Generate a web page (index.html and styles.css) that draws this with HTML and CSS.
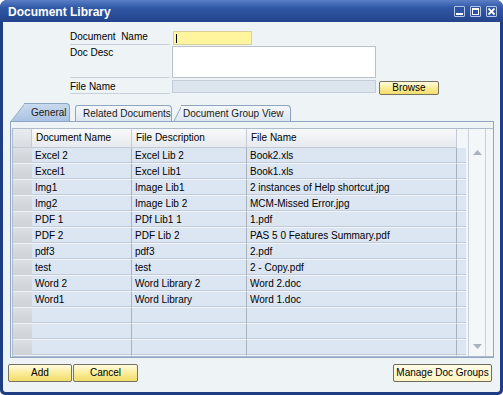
FILE: index.html
```html
<!DOCTYPE html>
<html lang="en">

<head>
    <meta charset="UTF-8">
    <title>Document Library</title>
    <link rel="stylesheet" href="styles.css">
</head>

<body>
    <div class="window">

        <!-- Title bar -->
        <div class="titlebar">
            <span class="title">Document Library</span>
            <div class="win-btns">
                <span class="win-btn">
                    <svg width="9" height="9" viewBox="0 0 9 9"><rect x="1" y="6" width="7" height="2" fill="#fff" /></svg>
                </span>
                <span class="win-btn">
                    <svg width="9" height="9" viewBox="0 0 9 9"><rect x="1.5" y="1.5" width="6" height="6" fill="none" stroke="#fff" /><rect x="1" y="1" width="7" height="2" fill="#fff" /></svg>
                </span>
                <span class="win-btn">
                    <svg width="9" height="9" viewBox="0 0 9 9"><path d="M1.5 1.5l6 6M7.5 1.5l-6 6" stroke="#fff" stroke-width="1.8" /></svg>
                </span>
            </div>
        </div>

        <div class="content">

            <!-- Header fields -->
            <div class="form">
                <div class="label r1">Document&nbsp; Name</div>
                <div class="field r1"><div class="input yellow"><span class="caret"></span></div></div>
                <div class="r1"></div>

                <div class="label r2">Doc Desc</div>
                <div class="field r2"><div class="textarea"></div></div>
                <div class="r2"></div>

                <div class="label r3">File Name</div>
                <div class="field r3"><div class="input grey"></div></div>
                <div class="r3"><div class="btn browse">Browse</div></div>
            </div>

            <!-- Tabs -->
            <div class="tabs">
                <div class="tab active">General</div>
                <div class="tab related">Related Documents</div>
                <div class="tab group">Document Group View</div>
            </div>

            <div class="panel">
                <div class="grid">
                    <div class="table">
                        <div class="head">
                            <div class="cell rh"></div>
                            <div class="cell c1">Document Name</div>
                            <div class="cell c2">File Description</div>
                            <div class="cell c3">File Name</div>
                        </div>
                        <div class="row"><div class="cell rh"></div><div class="cell c1">Excel 2</div><div class="cell c2">Excel Lib 2</div><div class="cell c3">Book2.xls</div><div class="cell fill"></div></div>
                        <div class="row"><div class="cell rh"></div><div class="cell c1">Excel1</div><div class="cell c2">Excel Lib1</div><div class="cell c3">Book1.xls</div><div class="cell fill"></div></div>
                        <div class="row"><div class="cell rh"></div><div class="cell c1">Img1</div><div class="cell c2">Image Lib1</div><div class="cell c3">2 instances of Help shortcut.jpg</div><div class="cell fill"></div></div>
                        <div class="row"><div class="cell rh"></div><div class="cell c1">Img2</div><div class="cell c2">Image Lib 2</div><div class="cell c3">MCM-Missed Error.jpg</div><div class="cell fill"></div></div>
                        <div class="row"><div class="cell rh"></div><div class="cell c1">PDF 1</div><div class="cell c2">PDf Lib1 1</div><div class="cell c3">1.pdf</div><div class="cell fill"></div></div>
                        <div class="row"><div class="cell rh"></div><div class="cell c1">PDF 2</div><div class="cell c2">PDF Lib 2</div><div class="cell c3">PAS 5 0 Features Summary.pdf</div><div class="cell fill"></div></div>
                        <div class="row"><div class="cell rh"></div><div class="cell c1">pdf3</div><div class="cell c2">pdf3</div><div class="cell c3">2.pdf</div><div class="cell fill"></div></div>
                        <div class="row"><div class="cell rh"></div><div class="cell c1">test</div><div class="cell c2">test</div><div class="cell c3">2 - Copy.pdf</div><div class="cell fill"></div></div>
                        <div class="row"><div class="cell rh"></div><div class="cell c1">Word 2</div><div class="cell c2">Word Library 2</div><div class="cell c3">Word 2.doc</div><div class="cell fill"></div></div>
                        <div class="row"><div class="cell rh"></div><div class="cell c1">Word1</div><div class="cell c2">Word Library</div><div class="cell c3">Word 1.doc</div><div class="cell fill"></div></div>
                        <div class="row"><div class="cell rh"></div><div class="cell c1"></div><div class="cell c2"></div><div class="cell c3"></div><div class="cell fill"></div></div>
                        <div class="row"><div class="cell rh"></div><div class="cell c1"></div><div class="cell c2"></div><div class="cell c3"></div><div class="cell fill"></div></div>
                        <div class="row"><div class="cell rh"></div><div class="cell c1"></div><div class="cell c2"></div><div class="cell c3"></div><div class="cell fill"></div></div>
                    </div>
                    <div class="scroll">
                        <svg width="9" height="5" viewBox="0 0 9 5"><path d="M0 5L4.5 0 9 5z" fill="#a9b1bb" /></svg>
                        <svg width="9" height="5" viewBox="0 0 9 5"><path d="M0 0h9L4.5 5z" fill="#a9b1bb" /></svg>
                    </div>
                </div>
            </div>

            <!-- Buttons -->
            <div class="actions">
                <div class="btn add">Add</div>
                <div class="btn cancel">Cancel</div>
                <div class="btn manage">Manage Doc Groups</div>
            </div>

        </div>
    </div>
</body>

</html>
```

FILE: styles.css
```css
* {
    box-sizing: border-box;
}

body {
    margin: 0;
    font-family: "Liberation Sans", Arial, sans-serif;
    font-size: 10px;
    color: #000;
}

.window {
    width: 503px;
    height: 395px;
    background: #1f3d82;
    border-radius: 7px 7px 5px 5px;
    padding: 0 3px 3px;
    display: flex;
    flex-direction: column;
}

/* Title bar */

.titlebar {
    height: 22px;
    margin: 0 -3px;
    padding: 0 6px 0 8px;
    display: flex;
    align-items: center;
    justify-content: space-between;
    border-radius: 7px 7px 0 0;
    background: linear-gradient(#5a7fc6, #3058a6 35%, #2a4d98 70%, #23448a);
}

.title {
    color: #fff;
    font-size: 12px;
    font-weight: bold;
    padding-top: 1px;
}

.win-btns {
    display: flex;
    gap: 5px;
    margin-top: 1px;
}

.win-btn {
    width: 11px;
    height: 11px;
    border: 1px solid #b7c6e6;
    border-radius: 1px;
    background: #2d54a3;
    display: flex;
    align-items: center;
    justify-content: center;
}

.content {
    flex: 1;
    background: #eef3f6;
    border-radius: 0 0 3px 3px;
    display: flex;
    flex-direction: column;
}

/* Form */

.form {
    margin: 8px 0 0 67px;
    display: grid;
    grid-template-columns: 100px 206px 70px;
}

.label {
    border-bottom: 1px solid #c8d1db;
    line-height: 14px;
}

.label.r1 {
    height: 15px;
}

.label.r2 {
    height: 33px;
    padding-top: 1px;
}

.label.r3 {
    height: 16px;
    padding-top: 2px;
}

.field {
    padding-left: 2px;
}

.input {
    border: 1px solid #c9cfd6;
}

.input.yellow {
    width: 79px;
    height: 14px;
    margin: 1px 0 0 1px;
    background: #fff59f;
    border-color: #d9d19a;
    padding: 2px 0 0 2px;
}

.caret {
    display: block;
    width: 1px;
    height: 9px;
    background: #000;
}

.input.grey {
    width: 204px;
    height: 13px;
    margin-top: 2px;
    background: #dce4ee;
    border-color: #c4ccd8;
}

.textarea {
    width: 204px;
    height: 32px;
    margin-top: 1px;
    background: #fff;
    border: 1px solid #b9c1cb;
}

/* Buttons */

.btn {
    height: 18px;
    line-height: 16px;
    text-align: center;
    border: 1px solid #77725f;
    border-radius: 2px;
    background: linear-gradient(#fffbe2, #fbee9f 45%, #f3dc6a);
}

.browse {
    width: 60px;
    height: 14px;
    line-height: 12px;
    margin: 3px 0 0 3px;
}

/* Tabs */

.tabs {
    margin: 7px 0 0 7px;
    height: 19px;
    display: flex;
    align-items: flex-end;
    position: relative;
    z-index: 0;
}

.tab {
    position: relative;
    height: 16px;
    line-height: 15px;
    border: 1px solid #8ea5c1;
    border-bottom: none;
    border-left: none;
    border-radius: 0 4px 0 0;
    background: linear-gradient(#f5f8fb, #dce6f1);
    color: #1a1a1a;
}

/* slanted left side of a tab */
.tab::before {
    content: "";
    position: absolute;
    top: -1px;
    width: 16px;
    height: calc(100% + 1px);
    border-left: 1px solid #8ea5c1;
    border-top: 1px solid #8ea5c1;
    background: inherit;
    transform-origin: bottom left;
    z-index: -1;
}

.tab.active {
    height: 18px;
    line-height: 17px;
    margin-left: 14px;
    width: 46px;
    padding-left: 7px;
    background: linear-gradient(#c9daee, #a9c2e2);
}

.tab.active::before {
    left: -14px;
    transform: skewX(-38deg);
}

.tab.related {
    margin-left: 5px;
    width: 97px;
    padding-left: 7px;
    border-left: 1px solid #8ea5c1;
    border-radius: 3px 4px 0 0;
}

.tab.related::before {
    display: none;
}

.tab.group {
    margin-left: 9px;
    width: 110px;
    padding-left: 2px;
}

.tab.group::before {
    left: -8px;
    transform: skewX(-27deg);
}

/* Grid panel */

.panel {
    margin: 0 6px 0 7px;
    height: 237px;
    border: 1px solid #8ea6c3;
    padding: 6px 0 0 1px;
    background: #eef3f6;
    position: relative;
}

.grid {
    height: 229px;
    display: flex;
    border: 1px solid #adbacb;
    border-right: none;
    background: #f3f6f9;
}

.table {
    width: 453px;
}

.head,
.row {
    display: flex;
}

.head {
    height: 19px;
    line-height: 18px;
}

.head .cell {
    height: 19px;
    padding-left: 4px;
    background: linear-gradient(#f8f9fb, #e6eaee);
    border-right: 1px solid #c3cad3;
    border-bottom: 1px solid #c3cad3;
}

.head .rh {
    background: linear-gradient(#e9ecef, #d9dde2);
}

.row {
    height: 16px;
    line-height: 15px;
}

.row .cell {
    height: 16px;
    padding-left: 3px;
    background: #dce6f3;
    border-right: 1px solid #a9b3bf;
    border-bottom: 1px solid #f1f4f8;
    box-shadow: inset 0 -1px 0 #c2ccd8;
    white-space: nowrap;
    overflow: hidden;
}

.row .rh {
    background: linear-gradient(#dcdfe3, #cdd2d8);
    border-right: none;
    box-shadow: none;
    border-bottom: 1px solid #eef0f2;
}

.row .fill {
    border-right: none;
}

.rh {
    width: 19px;
}

.c1 {
    width: 100px;
}

.c2 {
    width: 115px;
}

.c3 {
    width: 210px;
}

.fill {
    width: 9px;
}

.scroll {
    width: 18px;
    margin-left: 2px;
    border-left: 1px solid #c9d1db;
    border-right: 1px solid #c9d1db;
    background: #f4f7fa;
    display: flex;
    flex-direction: column;
    justify-content: space-between;
    align-items: center;
    padding: 21px 0 7px;
}

/* Bottom buttons */

.actions {
    margin-top: 6px;
    padding: 0 8px 0 5px;
    display: flex;
}

.add {
    width: 64px;
}

.cancel {
    width: 65px;
    margin-left: 1px;
}

.manage {
    width: 99px;
    margin-left: auto;
    background: linear-gradient(#fffce8, #fcf4c0);
    border-color: #6e6a5c;
}
```
